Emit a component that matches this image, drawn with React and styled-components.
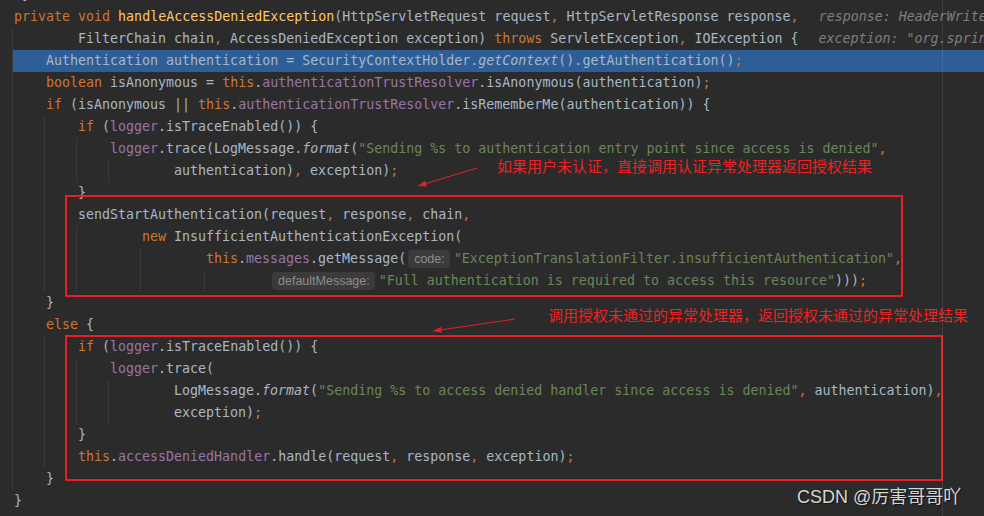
import React from "react";
import styled, { createGlobalStyle } from "styled-components";

const GlobalStyle = createGlobalStyle`
  html, body {
    margin: 0;
    padding: 0;
    background: #2b2b2b;
  }
`;

const Editor = styled.div`
  position: relative;
  width: 984px;
  height: 516px;
  overflow: hidden;
  background: #2b2b2b;
  font-family: "DejaVu Sans Mono", "Liberation Mono", monospace;
  font-size: 13.3px;
  color: #a9b7c6;

  &::after {
    content: "";
    position: absolute;
    top: 0;
    bottom: 0;
    left: 942px;
    width: 1px;
    background: rgba(255, 255, 255, 0.09);
  }
`;

const Lines = styled.div`
  display: flex;
  flex-direction: column;
  margin-top: -16px;
`;

const Line = styled.div`
  display: flex;
  align-items: center;
  height: 22px;
  padding-left: 12px;
  white-space: pre;
  background: ${(p) =>
    p.$hl ? "linear-gradient(to right, transparent 13px, #2e5e98 13px)" : "none"};
`;

const IndentCell = styled.span`
  flex: none;
  box-sizing: border-box;
  width: ${(p) => p.$w}px;
  height: 22px;
  border-left: 1px solid ${(p) => (p.$guide ? "#3b3b3b" : "transparent")};
`;

const Code = styled.span`
  display: flex;
  align-items: center;
  margin-left: 2px;
  line-height: 22px;
`;

const colors = {
  t: "#a9b7c6",
  k: "#cc7832",
  p: "#cc7832",
  m: "#ffc66d",
  f: "#9876aa",
  s: "#6a8759",
  i: "#a9b7c6",
};

const Tok = styled.span`
  color: ${(p) => colors[p.$kind]};
  font-style: ${(p) => (p.$kind === "i" ? "italic" : "normal")};
`;

const Hint = styled.span`
  display: inline-flex;
  align-items: center;
  height: 18px;
  padding: 0 5px 0 6px;
  margin: 0 4px 0 2px;
  border-radius: 4px;
  background: #3b3b3b;
  color: #8c8c8c;
  font-family: "Liberation Sans", Arial, sans-serif;
  font-size: 12.5px;
`;

const Value = styled.span`
  margin-left: 20px;
  color: #7f7f7f;
  font-style: italic;
`;

const Box = styled.div`
  position: absolute;
  left: 65px;
  top: ${(p) => p.$top}px;
  width: ${(p) => p.$w}px;
  height: ${(p) => p.$h}px;
  border: 2px solid #ed1c24;
  box-sizing: border-box;
`;

const Note = styled.div`
  position: absolute;
  left: ${(p) => p.$x}px;
  top: ${(p) => p.$y}px;
  color: #ee2222;
  font-family: "Noto Sans CJK SC", "Liberation Sans", sans-serif;
  font-size: 15px;
  line-height: 16px;
  white-space: nowrap;
`;

const Arrows = styled.svg`
  position: absolute;
  left: 0;
  top: 0;
`;

const Watermark = styled.div`
  position: absolute;
  left: 797px;
  top: 486px;
  color: #d6d6d6;
  font-family: "Liberation Sans", "Noto Sans CJK SC", sans-serif;
  font-size: 18px;
  line-height: 22px;
  text-shadow: 1px 1px 1px #111;
  white-space: nowrap;
`;

const lines = [
  { indent: 1, guides: [], src: "}" },
  {
    indent: 0,
    guides: [],
    src: "«k|private» «k|void» «m|handleAccessDeniedException»(HttpServletRequest request, HttpServletResponse response,",
    value: "response: HeaderWriterFilter$HeaderWriterResponse@10843",
  },
  {
    indent: 8,
    guides: [0],
    src: "FilterChain chain, AccessDeniedException exception) «k|throws» ServletException, IOException {",
    value: 'exception: "org.springframework.security.access.AccessDeniedException: Access Denied"',
  },
  {
    indent: 4,
    guides: [0],
    hl: true,
    src: "Authentication authentication = SecurityContextHolder.«i|getContext»().getAuthentication();",
  },
  {
    indent: 4,
    guides: [0],
    src: "«k|boolean» isAnonymous = «k|this».«f|authenticationTrustResolver».isAnonymous(authentication);",
  },
  {
    indent: 4,
    guides: [0],
    src: "«k|if» (isAnonymous || «k|this».«f|authenticationTrustResolver».isRememberMe(authentication)) {",
  },
  { indent: 8, guides: [0, 4], src: "«k|if» («f|logger».isTraceEnabled()) {" },
  {
    indent: 12,
    guides: [0, 4, 8],
    src: '«f|logger».trace(LogMessage.«i|format»(«s|"Sending %s to authentication entry point since access is denied"»,',
  },
  { indent: 20, guides: [0, 4, 8, 12], src: "authentication), exception);" },
  { indent: 8, guides: [0, 4], src: "}" },
  { indent: 8, guides: [0, 4], src: "sendStartAuthentication(request, response, chain," },
  { indent: 16, guides: [0, 4, 8], src: "«k|new» InsufficientAuthenticationException(" },
  {
    indent: 24,
    guides: [0, 4, 8, 16],
    src: '«k|this».«f|messages».getMessage(«h|code:»«s|"ExceptionTranslationFilter.insufficientAuthentication"»,',
  },
  {
    indent: 32,
    guides: [0, 4, 8, 16, 24],
    src: '«h|defaultMessage:»«s|"Full authentication is required to access this resource"»)));',
  },
  { indent: 4, guides: [0], src: "}" },
  { indent: 4, guides: [0], src: "«k|else» {" },
  { indent: 8, guides: [0, 4], src: "«k|if» («f|logger».isTraceEnabled()) {" },
  { indent: 12, guides: [0, 4, 8], src: "«f|logger».trace(" },
  {
    indent: 20,
    guides: [0, 4, 8, 12],
    src: 'LogMessage.«i|format»(«s|"Sending %s to access denied handler since access is denied"», authentication),',
  },
  { indent: 20, guides: [0, 4, 8, 12], src: "exception);" },
  { indent: 8, guides: [0, 4], src: "}" },
  {
    indent: 8,
    guides: [0, 4],
    src: "«k|this».«f|accessDeniedHandler».handle(request, response, exception);",
  },
  { indent: 4, guides: [0], src: "}" },
  { indent: 0, guides: [], src: "}" },
];

// split "«k|text»" markup into tokens, commas and semicolons go orange
const parse = (src) => {
  const out = [];
  const plain = (text) =>
    text
      .split(/([,;])/)
      .filter(Boolean)
      .forEach((part) => out.push([/^[,;]$/.test(part) ? "p" : "t", part]));
  const re = /«(\w)\|([^»]*)»/g;
  let last = 0;
  let m;
  while ((m = re.exec(src))) {
    if (m.index > last) plain(src.slice(last, m.index));
    out.push([m[1], m[2]]);
    last = re.lastIndex;
  }
  if (last < src.length) plain(src.slice(last));
  return out;
};

const segments = (indent, guides) => {
  const cols = guides.filter((g) => g < indent);
  const segs = [];
  if (indent > 0 && (cols.length === 0 || cols[0] > 0)) {
    segs.push({ w: (cols[0] ?? indent) * 8, guide: false });
  }
  cols.forEach((g, i) => {
    const end = cols[i + 1] ?? indent;
    segs.push({ w: (end - g) * 8, guide: true });
  });
  return segs;
};

const CodeLine = ({ line }) => (
  <Line $hl={line.hl}>
    {segments(line.indent, line.guides).map((s, i) => (
      <IndentCell key={i} $w={s.w} $guide={s.guide} />
    ))}
    <Code>
      {parse(line.src).map(([kind, text], i) =>
        kind === "h" ? (
          <Hint key={i}>{text}</Hint>
        ) : (
          <Tok key={i} $kind={kind}>
            {text}
          </Tok>
        )
      )}
      {line.value && <Value>{line.value}</Value>}
    </Code>
  </Line>
);

const Arrow = ({ x1, y1, x2, y2 }) => {
  const a = Math.atan2(y2 - y1, x2 - x1);
  const len = 9;
  const spread = 0.35;
  const p1 = [x2 - len * Math.cos(a - spread), y2 - len * Math.sin(a - spread)];
  const p2 = [x2 - len * Math.cos(a + spread), y2 - len * Math.sin(a + spread)];
  return (
    <g>
      <line x1={x1} y1={y1} x2={x2} y2={y2} stroke="#e0202a" strokeWidth="1.2" />
      <polygon points={`${x2},${y2} ${p1[0]},${p1[1]} ${p2[0]},${p2[1]}`} fill="#e0202a" />
    </g>
  );
};

export default function App() {
  return (
    <>
      <GlobalStyle />
      <Editor>
        <Lines>
          {lines.map((line, i) => (
            <CodeLine key={i} line={line} />
          ))}
        </Lines>

        <Box $top={195} $w={838} $h={102} />
        <Box $top={335} $w={878} $h={146} />

        <Note $x={497} $y={158}>如果用户未认证，直接调用认证异常处理器返回授权结果</Note>
        <Note $x={548} $y={307}>调用授权未通过的异常处理器，返回授权未通过的异常处理结果</Note>

        <Arrows width="984" height="516">
          <Arrow x1={477} y1={168} x2={418} y2={186} />
          <Arrow x1={515} y1={319} x2={433} y2={331} />
        </Arrows>

        <Watermark>CSDN @厉害哥哥吖</Watermark>
      </Editor>
    </>
  );
}
